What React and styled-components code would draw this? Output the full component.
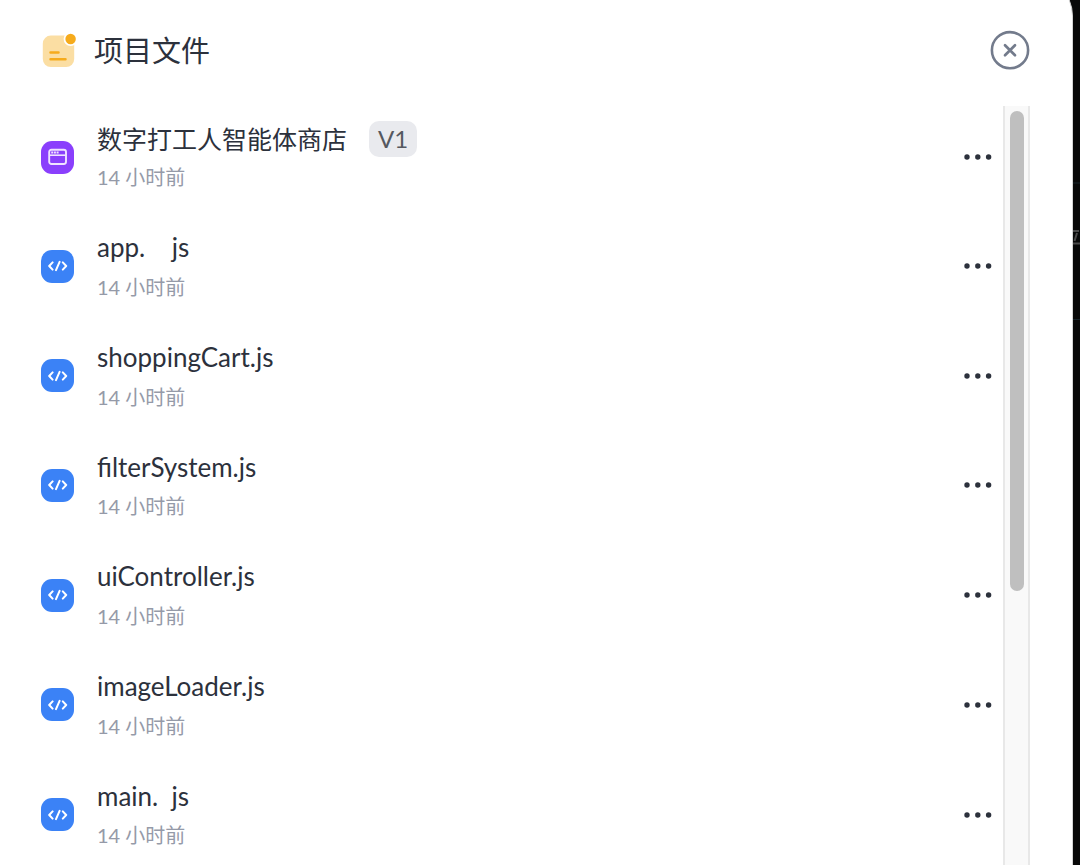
import React from "react";
import styled, { createGlobalStyle } from "styled-components";

const GlobalStyle = createGlobalStyle`
  * {
    box-sizing: border-box;
  }
  body {
    margin: 0;
    background: #080909;
    font-family: "Lato", "Noto Sans CJK SC", sans-serif;
    overflow: hidden;
  }
  button {
    padding: 0;
    border: none;
    background: none;
    cursor: pointer;
  }
`;

const Page = styled.div`
  display: flex;
  height: 100vh;
  overflow: hidden;
`;
const Panel = styled.main`
  flex: 1;
  display: flex;
  flex-direction: column;
  margin-top: -24px;
  padding: 54px 42px 0 41px;
  background: #fff;
  border-right: 1px solid #d4d4d4;
  border-radius: 0 40px 0 0;
`;
const Backdrop = styled.div`
  width: 7px;
  svg {
    display: block;
  }
`;
const Header = styled.header`
  display: flex;
  align-items: center;
  height: 40px;
  margin-bottom: 36px;
  svg {
    display: block;
  }
`;
const Title = styled.h1`
  flex: 1;
  margin: 0;
  padding: 2px 0 0 17px;
  font-weight: 400;
  font-size: 29px;
  line-height: 40px;
  color: #2c313c;
`;
const Body = styled.div`
  flex: 1;
  display: flex;
  min-height: 0;
`;
const List = styled.ul`
  flex: 1;
  display: flex;
  flex-direction: column;
  gap: 36px;
  margin: 0;
  padding: 15px 10px 0 0;
  list-style: none;
  overflow: hidden;
`;
const Row = styled.li`
  display: flex;
  align-items: center;
  gap: 23px;
`;
const FileIcon = styled.span`
  display: flex;
  align-items: center;
  justify-content: center;
  width: 33px;
  height: 33px;
  border-radius: 11px;
  background: ${(props) => (props.$kind === "page" ? "#8a3ffc" : "#3b82f6")};
`;
const Info = styled.div`
  flex: 1;
  display: flex;
  flex-direction: column;
  gap: 4px;
`;
const NameLine = styled.div`
  display: flex;
  align-items: center;
  gap: 22px;
`;
const Name = styled.span`
  font-size: ${(props) => (props.$kind === "page" ? "25px" : "26px")};
  line-height: 1.45;
  color: #2c313c;
  white-space: pre;
`;
const Badge = styled.span`
  padding: 0 9px;
  border-radius: 10px;
  background: #e9eaee;
  font-size: 24px;
  line-height: 36px;
  color: #55585f;
`;
const Time = styled.span`
  font-size: 20px;
  line-height: 32px;
  color: #959aa8;
`;
const MoreButton = styled.button`
  width: 30px;
  height: 30px;
  svg {
    display: block;
  }
`;
const CloseButton = styled.button`
  width: 40px;
  height: 40px;
`;
const Track = styled.div`
  width: 27px;
  padding: 5px 4px 0 5px;
  background: #f9f9f9;
  border: solid #e8e8e8;
  border-width: 0 2px;
`;
const Thumb = styled.div`
  height: 480px;
  border-radius: 8px;
  background: #bfbfbf;
`;

const files = [
  { name: "数字打工人智能体商店", kind: "page", version: "V1" },
  { name: "app.    js" },
  { name: "shoppingCart.js" },
  { name: "filterSystem.js" },
  { name: "uiController.js" },
  { name: "imageLoader.js" },
  { name: "main.  js" },
];

function NoteIcon() {
  return (
    <svg width="36" height="36" viewBox="0 0 36 36" fill="none">
      <rect x="1.8" y="3.6" width="31.4" height="31.4" rx="8" fill="#fbdea3" />
      <circle cx="29.6" cy="7" r="7" fill="#fff" />
      <circle cx="29.6" cy="7" r="5.2" fill="#f6ab1c" />
      <path
        d="M9.5 20.6h8M9.5 27.2h15"
        stroke="#f6ab1c"
        strokeWidth="2.5"
        strokeLinecap="round"
      />
    </svg>
  );
}

function PageIcon() {
  return (
    <svg width="20" height="18" viewBox="0 0 20 18" fill="none">
      <rect x="1.2" y="1.8" width="16.8" height="14.2" rx="2.2" stroke="#efe3ff" strokeWidth="1.9" />
      <path d="M1.5 7.2h16.4" stroke="#efe3ff" strokeWidth="1.6" />
      <path d="M3.2 4.5h7.4" stroke="#efe3ff" strokeWidth="1.8" strokeDasharray="2 0.7" />
    </svg>
  );
}

function CodeIcon() {
  return (
    <svg width="20" height="12" viewBox="0 0 20 12" fill="none">
      <path
        d="M4.6 2.4L1.2 6L4.6 9.6M14.8 2.4L18.2 6L14.8 9.6M11.6 1.8L8 10.2"
        stroke="#fff"
        strokeWidth="2"
        strokeLinecap="round"
        strokeLinejoin="round"
      />
    </svg>
  );
}

function FileRow({ file }) {
  return (
    <Row>
      <FileIcon $kind={file.kind}>
        {file.kind === "page" ? <PageIcon /> : <CodeIcon />}
      </FileIcon>
      <Info>
        <NameLine>
          <Name $kind={file.kind}>{file.name}</Name>
          {file.version && <Badge>{file.version}</Badge>}
        </NameLine>
        <Time>14 小时前</Time>
      </Info>
      <MoreButton type="button" aria-label="更多">
        <svg width="30" height="30" viewBox="0 0 30 30" fill="#2c313c">
          <circle cx="4" cy="15" r="2.7" />
          <circle cx="14.8" cy="15" r="2.7" />
          <circle cx="25.6" cy="15" r="2.7" />
        </svg>
      </MoreButton>
    </Row>
  );
}

export default function App() {
  return (
    <>
      <GlobalStyle />
      <Page>
        <Panel>
          <Header>
            <NoteIcon />
            <Title>项目文件</Title>
            <CloseButton type="button" aria-label="关闭">
              <svg width="40" height="40" viewBox="0 0 40 40" fill="none">
                <circle cx="20" cy="20.2" r="18.1" stroke="#737b8c" strokeWidth="2.6" />
                <path
                  d="M15 15.2l10 10M25 15.2L15 25.2"
                  stroke="#737b8c"
                  strokeWidth="2.7"
                  strokeLinecap="round"
                />
              </svg>
            </CloseButton>
          </Header>
          <Body>
            <List>
              {files.map((file) => (
                <FileRow key={file.name} file={file} />
              ))}
            </List>
            <Track>
              <Thumb />
            </Track>
          </Body>
        </Panel>
        <Backdrop>
          <svg width="7" height="330" viewBox="0 0 7 330" fill="none">
            <path d="M0 183h7M0 319.5h7" stroke="#17242a" />
            <path d="M0 231h6M0 243.5h7M1.5 241l2.5-8" stroke="#4a4a4a" strokeWidth="2" />
          </svg>
        </Backdrop>
      </Page>
    </>
  );
}
